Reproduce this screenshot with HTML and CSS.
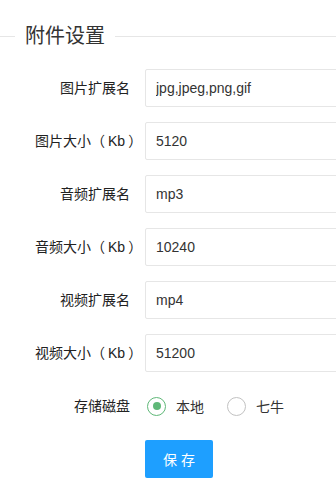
FILE: index.html
```html
<!DOCTYPE html>
<html lang="zh-CN">
<head>
<meta charset="utf-8">
<title>附件设置</title>
<link rel="stylesheet" href="styles.css">
</head>
<body>
<fieldset class="field-title">
  <legend>附件设置</legend>
</fieldset>
<form class="form">
  <div class="form-item">
    <label class="form-label">图片扩展名</label>
    <input class="form-input" type="text" value="jpg,jpeg,png,gif">
  </div>
  <div class="form-item">
    <label class="form-label">图片大小（<span class="unit">Kb</span>）</label>
    <input class="form-input" type="text" value="5120">
  </div>
  <div class="form-item">
    <label class="form-label">音频扩展名</label>
    <input class="form-input" type="text" value="mp3">
  </div>
  <div class="form-item">
    <label class="form-label">音频大小（<span class="unit">Kb</span>）</label>
    <input class="form-input" type="text" value="10240">
  </div>
  <div class="form-item">
    <label class="form-label">视频扩展名</label>
    <input class="form-input" type="text" value="mp4">
  </div>
  <div class="form-item">
    <label class="form-label">视频大小（<span class="unit">Kb</span>）</label>
    <input class="form-input" type="text" value="51200">
  </div>
  <div class="form-item">
    <label class="form-label">存储磁盘</label>
    <div class="radio-group">
      <span class="radio checked"><i class="radio-icon"></i><span>本地</span></span>
      <span class="radio"><i class="radio-icon"></i><span>七牛</span></span>
    </div>
  </div>
  <div class="form-actions">
    <button class="btn" type="button">保 存</button>
  </div>
</form>
</body>
</html>
```

FILE: styles.css
```css
html, body {
  margin: 0;
  padding: 0;
  overflow: hidden;
  background: #fff;
}

body {
  font-family: "Liberation Sans", "Noto Sans CJK SC", sans-serif;
  font-size: 14px;
  color: #333;
  width: 336px;
}

.field-title {
  margin: 24px -40px 0 0;
  padding: 0;
  border: none;
  border-top: 1px solid #e6e6e6;
  min-width: 0;
}

.field-title legend {
  margin-left: 15px;
  padding: 0 10px;
  font-size: 20px;
  line-height: 24px;
  font-weight: 400;
  color: #333;
}

.form {
  margin-top: 21px;
  padding-left: 35px;
}

.form-item {
  display: flex;
  align-items: center;
  margin-bottom: 15px;
  height: 38px;
}

.form-label {
  width: 110px;
  flex: none;
  box-sizing: border-box;
  padding-right: 15px;
  text-align: right;
  line-height: 38px;
  white-space: nowrap;
  color: #222;
}

.unit {
  margin: 0 3px;
}

.form-input {
  flex: none;
  width: 240px;
  height: 38px;
  box-sizing: border-box;
  border: 1px solid #e6e6e6;
  border-radius: 2px;
  padding: 0 10px;
  font-family: inherit;
  font-size: 14px;
  color: #333;
  background: #fff;
  outline: none;
}

.radio-group {
  display: flex;
  align-items: center;
  padding-left: 2px;
}

.radio {
  display: inline-flex;
  align-items: center;
  gap: 10px;
  margin-right: 23px;
}

.radio-icon {
  width: 19px;
  height: 19px;
  box-sizing: border-box;
  border: 1.5px solid #c2c2c2;
  border-radius: 50%;
  display: flex;
  align-items: center;
  justify-content: center;
}

.radio.checked .radio-icon {
  border-color: #5fb878;
}

.radio.checked .radio-icon::after {
  content: "";
  width: 8px;
  height: 8px;
  border-radius: 50%;
  background: #5fb878;
}

.form-actions {
  padding-left: 110px;
}

.btn {
  width: 68px;
  height: 38px;
  border: none;
  border-radius: 2px;
  background: #1e9fff;
  color: #fff;
  font-family: inherit;
  font-size: 14px;
  padding: 0;
  cursor: pointer;
}
```
